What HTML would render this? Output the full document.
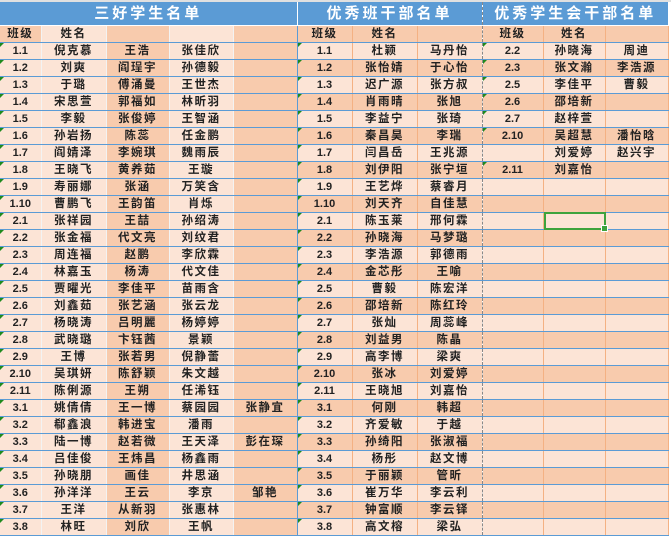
<!DOCTYPE html>
<html><head><meta charset="utf-8"><style>
html,body{margin:0;padding:0;width:671px;height:537px;overflow:hidden;background:#fff;}
body{font-family:"Liberation Sans","Noto Sans CJK SC",sans-serif;}
.top{position:absolute;left:0;top:0;width:671px;height:2px;background:#e0e0e0;}
table{position:absolute;left:0;top:2px;border-collapse:collapse;table-layout:fixed;width:668px;}
td{padding:0;height:16px;border-bottom:1px solid #5b9bd5;text-align:center;font-size:11.5px;font-weight:bold;color:#222;letter-spacing:1.5px;white-space:nowrap;overflow:hidden;position:relative;line-height:16px;}
tr.t td{height:23px;background:#5b9bd5;color:#fff;font-size:15px;letter-spacing:3px;border-bottom:1px solid #fff;}
.L{background:#fce4d6;}
.D{background:#f8cbad;}
.wl td.a,.wl td.b,.wl td.c2,.wl td.d{border-right:1px solid #f3f3f3;}
td.e{border-right:1px solid #5b9bd5;}
td.f,td.g,td.i,td.j{border-right:1px solid #f4b183;}
td.h{border-right:1px dashed #888;}
td.k{border-right:1px solid #f4b183;}
td.m::before{content:"";position:absolute;left:0;top:0;border-top:4px solid #1e8a1e;border-right:4px solid transparent;}
td.num{font-family:"Liberation Sans",sans-serif;letter-spacing:0;font-size:11px;}
.sel{position:absolute;left:544px;top:212px;width:58px;height:14px;border:2px solid #3da33d;}
.sel::after{content:"";position:absolute;right:-4px;bottom:-4px;width:5px;height:5px;background:#3da33d;border:1px solid #fff;}
</style></head><body>
<div class="top"></div>
<table>
<colgroup><col style="width:41px"><col style="width:65px"><col style="width:63px"><col style="width:64px"><col style="width:64px"><col style="width:55px"><col style="width:65px"><col style="width:65px"><col style="width:61px"><col style="width:62px"><col style="width:63px"></colgroup>
<tr class="t"><td colspan="5" style="border-right:1px solid #fff">三好学生名单</td><td colspan="3" style="border-right:1px dashed #888">优秀班干部名单</td><td colspan="3">优秀学生会干部名单</td></tr>
<tr class="wl"><td class="a D">班级</td><td class="b L">姓名</td><td class="c2 D"></td><td class="d L"></td><td class="e D"></td><td class="f D">班级</td><td class="g D">姓名</td><td class="h D"></td><td class="i D">班级</td><td class="j D">姓名</td><td class="k D"></td></tr>
</table>
<div class="sel"></div>
<script>
var L=[["1.1","倪克慕","王浩","张佳欣",""],["1.2","刘爽","阎珵宇","孙德毅",""],["1.3","于璐","傅涌曼","王世杰",""],["1.4","宋思萱","郭福如","林昕羽",""],["1.5","李毅","张俊婷","王智涵",""],["1.6","孙岩扬","陈蕊","任金鹏",""],["1.7","阎婧泽","李婉琪","魏雨辰",""],["1.8","王晓飞","黄养茹","王璇",""],["1.9","寿丽娜","张涵","万笑含",""],["1.10","曹鹏飞","王韵笛","肖烁",""],["2.1","张祥园","王喆","孙绍涛",""],["2.2","张金福","代文亮","刘纹君",""],["2.3","周连福","赵鹏","李欣霖",""],["2.4","林嘉玉","杨涛","代文佳",""],["2.5","贾曜光","李佳平","苗雨含",""],["2.6","刘鑫茹","张艺涵","张云龙",""],["2.7","杨晓涛","吕明麗","杨婷婷",""],["2.8","武晓璐","卞钰茜","景颖",""],["2.9","王博","张若男","倪静蕾",""],["2.10","吴琪妍","陈舒颖","朱文越",""],["2.11","陈俐源","王朔","任浠钰",""],["3.1","姚倩倩","王一博","蔡园园","张静宜"],["3.2","郗鑫浪","韩进宝","潘雨",""],["3.3","陆一博","赵若微","王天泽","彭在琛"],["3.4","吕佳俊","王炜昌","杨鑫雨",""],["3.5","孙晓朋","画佳","井思涵",""],["3.6","孙洋洋","王云","李京","邹艳"],["3.7","王洋","从新羽","张惠林",""],["3.8","林旺","刘欣","王帆",""]];
var M=[["杜颖","马丹怡"],["张怡婧","于心怡"],["迟广源","张方叔"],["肖雨晴","张旭"],["李益宁","张琦"],["秦昌昊","李瑞"],["闫昌岳","王兆源"],["刘伊阳","张宁垣"],["王艺烨","蔡睿月"],["刘天齐","自佳慧"],["陈玉莱","邢何霖"],["孙晓海","马梦璐"],["李浩源","郭德雨"],["金芯彤","王喻"],["曹毅","陈宏洋"],["邵培新","陈红玲"],["张灿","周蕊峰"],["刘益男","陈晶"],["高李博","梁爽"],["张冰","刘爱婷"],["王晓旭","刘嘉怡"],["何刚","韩超"],["齐爱敏","于越"],["孙绮阳","张淑福"],["杨彤","赵文博"],["于丽颖","管昕"],["崔万华","李云利"],["钟富顺","李云铎"],["高文榕","梁弘"]];
var R=[["2.2","孙晓海","周迪"],["2.3","张文瀚","李浩源"],["2.5","李佳平","曹毅"],["2.6","邵培新",""],["2.7","赵梓萱",""],["2.10","吴超慧","潘怡晗"],["","刘爱婷","赵兴宇"],["2.11","刘嘉怡",""]];
var t=document.querySelector("table"),h="";
for(var i=0;i<29;i++){var l=L[i],m=M[i],r=R[i]||["","",""],c=(i%2==0)?"L":"D";
h+='<tr class="wl"><td class="a L m num">'+l[0]+'</td><td class="b L">'+l[1]+'</td><td class="c2 D">'+l[2]+'</td><td class="d L">'+l[3]+'</td><td class="e D">'+l[4]+'</td>'+
'<td class="f '+c+' m num">'+l[0]+'</td><td class="g '+c+'">'+m[0]+'</td><td class="h '+c+'">'+m[1]+'</td>'+
'<td class="i '+c+(r[0]?' m':'')+' num">'+r[0]+'</td><td class="j '+c+'">'+r[1]+'</td><td class="k '+c+'">'+r[2]+'</td></tr>';}
t.insertAdjacentHTML("beforeend",h);
</script>
</body></html>
